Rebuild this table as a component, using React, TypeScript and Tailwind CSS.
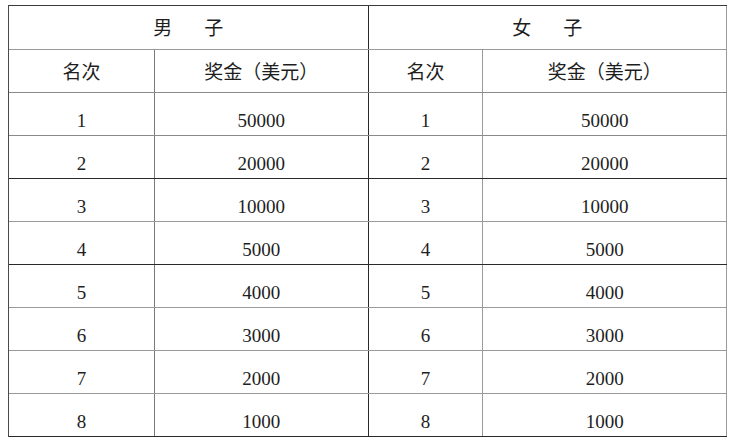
import React from "react";

const data: [number, number][] = [
  [1, 50000],
  [2, 20000],
  [3, 10000],
  [4, 5000],
  [5, 4000],
  [6, 3000],
  [7, 2000],
  [8, 1000],
];

const rowBorders = [
  "border-[#8a8a8a]",
  "border-[#2a2a2a]",
  "border-[#9a9a9a]",
  "border-[#2a2a2a]",
  "border-[#9a9a9a]",
  "border-[#9a9a9a]",
  "border-[#9a9a9a]",
  "border-[#2a2a2a]",
];

export default function App() {
  return (
    <div
      className="w-[734px] h-[445px] bg-white text-[#1e1e1e] pt-[5px] pl-[8px]"
      style={{ fontFamily: '"Liberation Serif", "Noto Sans CJK SC", serif' }}
    >
      <div className="w-[719px] border-t border-l border-t-[#3a3a3a] border-l-[#4a4a4a]">
        {/* header row 1 */}
        <div className="flex h-[44px] border-b border-[#9a9a9a]">
          <div className="w-[360px] border-r border-[#2a2a2a] flex items-center justify-center gap-[32px] text-[19px]" style={{ fontFamily: '"Noto Sans CJK SC", sans-serif' }}>
            <span>男</span>
            <span>子</span>
          </div>
          <div className="w-[359px] border-r border-[#9a9a9a] flex items-center justify-center gap-[32px] text-[19px]" style={{ fontFamily: '"Noto Sans CJK SC", sans-serif' }}>
            <span>女</span>
            <span>子</span>
          </div>
        </div>
        {/* header row 2 */}
        <div className="flex h-[43px] border-b border-[#8a8a8a] text-[19px]" style={{ fontFamily: '"Noto Sans CJK SC", sans-serif' }}>
          <div className="w-[146px] border-r border-[#7a7a7a] flex items-center justify-center">名次</div>
          <div className="w-[214px] border-r border-[#2a2a2a] flex items-center justify-center">奖金（美元）</div>
          <div className="w-[115px] border-r border-[#9a9a9a] flex items-center justify-center">名次</div>
          <div className="w-[244px] border-r border-[#9a9a9a] flex items-center justify-center">奖金（美元）</div>
        </div>
        {data.map(([rank, prize], i) => (
          <div
            key={rank}
            className={`flex h-[43px] border-b ${rowBorders[i]} text-[19px]`}
          >
            <div className="w-[146px] border-r border-[#7a7a7a] flex items-center justify-center pt-[15px]">{rank}</div>
            <div className="w-[214px] border-r border-[#2a2a2a] flex items-center justify-center pt-[15px]">{prize}</div>
            <div className="w-[115px] border-r border-[#9a9a9a] flex items-center justify-center pt-[15px]">{rank}</div>
            <div className="w-[244px] border-r border-[#9a9a9a] flex items-center justify-center pt-[15px]">{prize}</div>
          </div>
        ))}
      </div>
    </div>
  );
}
